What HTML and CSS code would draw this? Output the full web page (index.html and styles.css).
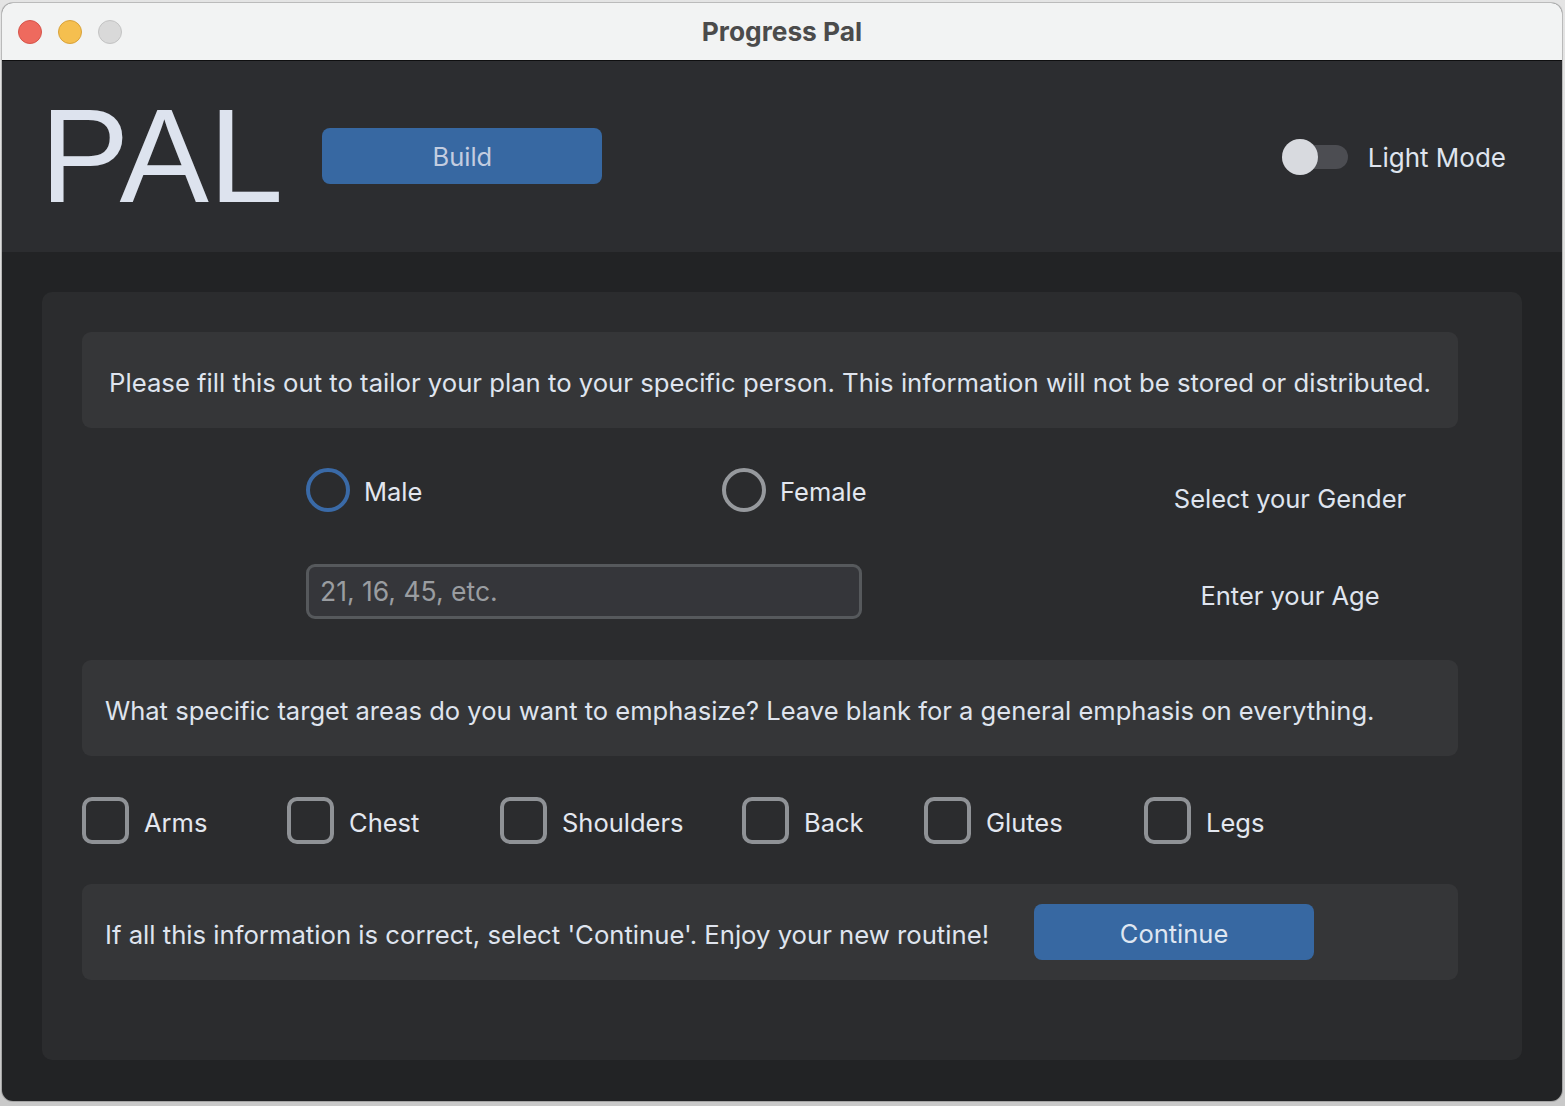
FILE: index.html
```html
<!DOCTYPE html>
<html lang="en">
<head>
<meta charset="utf-8">
<title>Progress Pal</title>
<link rel="stylesheet" href="styles.css">
</head>
<body>
<div class="window">
  <div class="titlebar">
    <div class="lights">
      <span class="light red"></span>
      <span class="light yellow"></span>
      <span class="light gray"></span>
    </div>
    <div class="title">Progress Pal</div>
  </div>
  <header class="header">
    <div class="logo">PAL</div>
    <button class="btn btn-build">Build</button>
    <div class="spacer"></div>
    <div class="toggle"><span class="knob"></span></div>
    <span class="toggle-label">Light Mode</span>
  </header>
  <main class="main">
    <section class="card">
      <div class="panel panel-intro">Please fill this out to tailor your plan to your specific person. This information will not be stored or distributed.</div>

      <div class="form-grid">
        <div class="radios">
          <label class="radio-opt"><span class="radio radio-active"></span><span class="opt-text">Male</span></label>
          <label class="radio-opt"><span class="radio"></span><span class="opt-text">Female</span></label>
        </div>
        <div class="field-label label-gender">Select your Gender</div>
        <div class="age-input">21, 16, 45, etc.</div>
        <div class="field-label label-age">Enter your Age</div>
      </div>

      <div class="panel panel-text">What specific target areas do you want to emphasize? Leave blank for a general emphasis on everything.</div>

      <div class="checks">
        <label class="check cb-arms"><span class="box"></span><span class="opt-text">Arms</span></label>
        <label class="check cb-chest"><span class="box"></span><span class="opt-text">Chest</span></label>
        <label class="check cb-shoulders"><span class="box"></span><span class="opt-text">Shoulders</span></label>
        <label class="check cb-back"><span class="box"></span><span class="opt-text">Back</span></label>
        <label class="check cb-glutes"><span class="box"></span><span class="opt-text">Glutes</span></label>
        <label class="check cb-legs"><span class="box"></span><span class="opt-text">Legs</span></label>
      </div>

      <div class="panel panel-confirm">
        <span class="confirm-text">If all this information is correct, select 'Continue'. Enjoy your new routine!</span>
        <button class="btn btn-continue">Continue</button>
      </div>
    </section>
  </main>
</div>
</body>
</html>
```

FILE: styles.css
```css
* { box-sizing: border-box; }

html, body {
  margin: 0;
  padding: 0;
}

body {
  width: 1565px;
  height: 1106px;
  background: linear-gradient(#e4e4e4, #c9c9c9);
  font-family: Inter, "Noto Sans", sans-serif;
  color: #dfe4ee;
  overflow: hidden;
  padding: 3px 3px 0 2px;
}

.window {
  width: 1560px;
  height: 1098px;
  border-radius: 11px;
  overflow: hidden;
  display: flex;
  flex-direction: column;
  background: #222325;
  box-shadow: 0 0 0 1px rgba(0,0,0,0.18);
}

/* Title bar */
.titlebar {
  height: 58px;
  flex: none;
  background: #f2f3f3;
  border-bottom: 1px solid #0f0f10;
  position: relative;
  display: flex;
  align-items: center;
  justify-content: center;
}

.lights {
  position: absolute;
  left: 16px;
  top: 17px;
  display: flex;
  gap: 16px;
}

.light {
  width: 24px;
  height: 24px;
  border-radius: 50%;
  display: block;
}
.light.red { background: #ee6a5e; border: 1px solid #d6544a; }
.light.yellow { background: #f5bf4f; border: 1px solid #d9a23a; }
.light.gray { background: #d9d9d9; border: 1px solid #c3c3c3; }

.title {
  font-weight: 700;
  font-size: 26.3px;
  color: #4b4b4b;
}

/* Header */
.header {
  height: 191px;
  flex: none;
  background: #2c2d30;
  display: flex;
  align-items: center;
  padding: 0 56px 0 38px;
}

.logo {
  font-family: "Liberation Sans", Arial, sans-serif;
  font-size: 134px;
  color: #dde3ee;
  line-height: 1;
  margin-top: -2px;
}

.btn {
  border: none;
  background: #3768a2;
  color: #d0d9e8;
  font-family: Inter, "Noto Sans", sans-serif;
  font-size: 25.5px;
  border-radius: 8px;
  padding: 0;
}

.btn-build {
  width: 280px;
  height: 56px;
  margin-left: 39px;
  margin-top: -2px;
  color: #c3cde0;
  padding-top: 2px;
}

.spacer { flex: 1; }

.toggle {
  position: relative;
  width: 66px;
  height: 24px;
  border-radius: 12px;
  background: #4c4d52;
}

.knob {
  position: absolute;
  left: 0;
  top: -6px;
  width: 36px;
  height: 36px;
  border-radius: 50%;
  background: #d8dadf;
}

.toggle-label {
  font-size: 26px;
  margin-left: 20px;
  margin-top: 2px;
  color: #dfe4ee;
}

/* Main */
.main {
  flex: 1;
  padding: 40px;
}

.card {
  background: #2b2c2e;
  border-radius: 10px;
  height: 768px;
  padding: 40px 64px 0 40px;
}

.panel {
  background: #353638;
  border-radius: 9px;
  height: 96px;
  display: flex;
  align-items: center;
  font-size: 25.7px;
}

.panel-intro {
  justify-content: center;
  padding-top: 5px;
}

.panel-text {
  padding-left: 23px;
  margin-top: 41px;
  padding-top: 5px;
  font-size: 25.55px;
}

/* Form grid */
.form-grid {
  display: grid;
  grid-template-columns: 224px 556px 1fr 336px;
  grid-template-rows: 84px 107px;
}

.radios {
  grid-column: 2;
  grid-row: 1;
  display: flex;
  align-items: center;
  padding-top: 40px;
}

.radio-opt {
  display: flex;
  align-items: center;
  width: 416px;
  flex: none;
}

.radio {
  width: 44px;
  height: 44px;
  border-radius: 50%;
  border: 4px solid #96999d;
  flex: none;
}

.radio-active { border-color: #3a6aa7; }

.opt-text {
  font-size: 25.5px;
  margin-left: 14px;
  color: #e3e7ef;
}

.radio-opt .opt-text { padding-top: 3px; }

.field-label {
  grid-column: 4;
  text-align: center;
  font-size: 25.5px;
  align-self: end;
}

.label-gender {
  grid-row: 1;
  margin-bottom: -2px;
}

.age-input {
  grid-column: 2;
  grid-row: 2;
  align-self: end;
  height: 55px;
  border: 3px solid #56595c;
  border-radius: 9px;
  background: #35363a;
  color: #9a9da1;
  font-size: 26.5px;
  display: flex;
  align-items: center;
  padding-left: 11px;
  padding-bottom: 2px;
}

.label-age {
  grid-row: 2;
  margin-bottom: 8px;
}

/* Checkboxes */
.checks {
  display: flex;
  align-items: center;
  margin-top: 41px;
  height: 46px;
}

.check {
  display: flex;
  align-items: center;
  flex: none;
}

.cb-arms { width: 205px; }
.cb-chest { width: 213px; }
.cb-shoulders { width: 242px; }
.cb-back { width: 182px; }
.cb-glutes { width: 220px; }

.box {
  width: 47px;
  height: 47px;
  border: 4px solid #8f9296;
  border-radius: 10px;
  flex: none;
}

.check .opt-text { margin-left: 15px; padding-top: 4px; }

/* Confirm */
.panel-confirm {
  margin-top: 41px;
  padding-left: 23px;
}

.confirm-text { margin-top: 4px; }

.btn-continue {
  width: 280px;
  height: 56px;
  margin-left: 45px;
  font-size: 25.5px;
  color: #dfe6f1;
  padding-top: 2px;
}
```
